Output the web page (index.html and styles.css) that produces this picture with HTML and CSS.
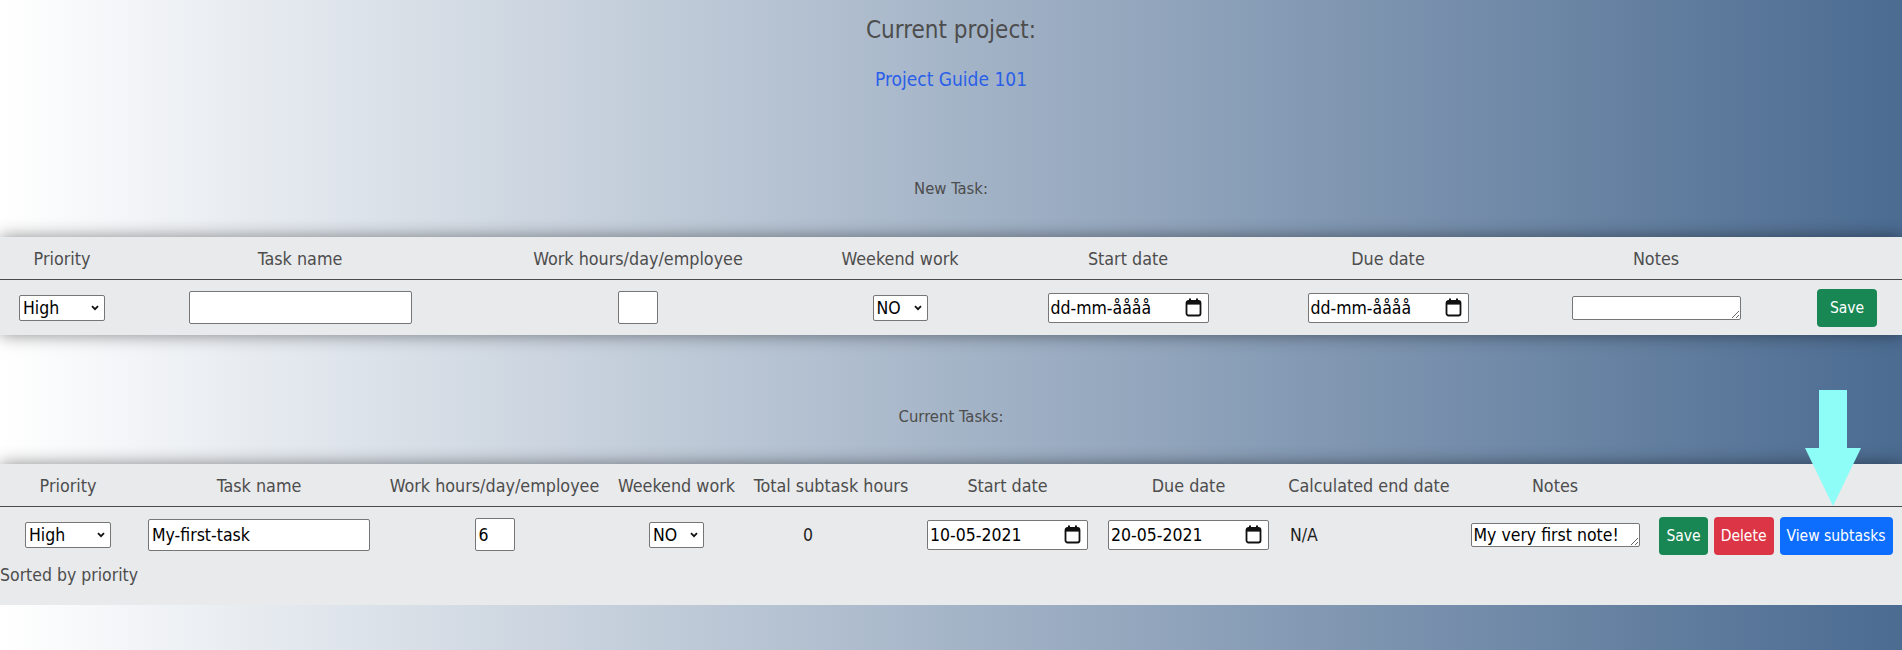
FILE: index.html
```html
<!DOCTYPE html>
<html lang="en">
<head>
<meta charset="utf-8">
<title>Current project</title>
<link rel="stylesheet" href="styles.css">
</head>
<body>
<header class="project-head">
  <h1 class="project-title">Current project:</h1>
  <a class="project-link" href="#">Project Guide 101</a>
</header>

<section class="section section-new">
  <p class="section-label">New Task:</p>
  <div class="panel">
    <table class="task-table">
      <colgroup>
        <col class="n1"><col class="n2"><col class="n3"><col class="n4"><col class="n5"><col class="n6"><col class="n7"><col class="n8">
      </colgroup>
      <thead>
        <tr>
          <th>Priority</th>
          <th>Task name</th>
          <th>Work hours/day/employee</th>
          <th>Weekend work</th>
          <th>Start date</th>
          <th>Due date</th>
          <th>Notes</th>
          <th></th>
        </tr>
      </thead>
      <tbody>
        <tr>
          <td><div class="cell">
            <span class="select-wrap sel-priority"><select class="select"><option>High</option><option>Medium</option><option>Low</option></select><svg class="chev" width="8" height="6" viewBox="0 0 8 6"><polyline points="1,1.2 4,4.2 7,1.2" fill="none" stroke="#111" stroke-width="1.8"/></svg></span>
          </div></td>
          <td><div class="cell"><input class="text-input task-input" type="text"></div></td>
          <td><div class="cell"><input class="text-input hours-input" type="text"></div></td>
          <td><div class="cell">
            <span class="select-wrap sel-weekend"><select class="select"><option>NO</option><option>YES</option></select><svg class="chev" width="8" height="6" viewBox="0 0 8 6"><polyline points="1,1.2 4,4.2 7,1.2" fill="none" stroke="#111" stroke-width="1.8"/></svg></span>
          </div></td>
          <td><div class="cell"><span class="date-field"><span class="date-text">dd-mm-åååå</span><svg class="cal" width="17" height="19" viewBox="0 0 17 19"><rect x="1.5" y="3" width="14" height="14.5" rx="2" fill="none" stroke="#111" stroke-width="1.8"/><rect x="1.5" y="3" width="14" height="3.6" fill="#111"/><rect x="4" y="0.5" width="2" height="3" fill="#111"/><rect x="11" y="0.5" width="2" height="3" fill="#111"/></svg></span></div></td>
          <td><div class="cell"><span class="date-field"><span class="date-text">dd-mm-åååå</span><svg class="cal" width="17" height="19" viewBox="0 0 17 19"><rect x="1.5" y="3" width="14" height="14.5" rx="2" fill="none" stroke="#111" stroke-width="1.8"/><rect x="1.5" y="3" width="14" height="3.6" fill="#111"/><rect x="4" y="0.5" width="2" height="3" fill="#111"/><rect x="11" y="0.5" width="2" height="3" fill="#111"/></svg></span></div></td>
          <td><div class="cell"><textarea class="notes"></textarea></div></td>
          <td><div class="cell"><button class="btn btn-success btn-wide" type="button">Save</button></div></td>
        </tr>
      </tbody>
    </table>
  </div>
</section>

<section class="section section-current">
  <p class="section-label">Current Tasks:</p>
  <div class="panel panel-current">
    <table class="task-table">
      <colgroup>
        <col class="c1"><col class="c2"><col class="c3"><col class="c4"><col class="c5"><col class="c6"><col class="c7"><col class="c8"><col class="c9"><col class="c10">
      </colgroup>
      <thead>
        <tr>
          <th>Priority</th>
          <th>Task name</th>
          <th>Work hours/day/employee</th>
          <th>Weekend work</th>
          <th>Total subtask hours</th>
          <th>Start date</th>
          <th>Due date</th>
          <th>Calculated end date</th>
          <th>Notes</th>
          <th></th>
        </tr>
      </thead>
      <tbody>
        <tr>
          <td><div class="cell">
            <span class="select-wrap sel-priority"><select class="select"><option>High</option><option>Medium</option><option>Low</option></select><svg class="chev" width="8" height="6" viewBox="0 0 8 6"><polyline points="1,1.2 4,4.2 7,1.2" fill="none" stroke="#111" stroke-width="1.8"/></svg></span>
          </div></td>
          <td><div class="cell"><input class="text-input task-input task-input-sm" type="text" value="My-first-task"></div></td>
          <td><div class="cell"><input class="text-input hours-input" type="text" value="6"></div></td>
          <td><div class="cell">
            <span class="select-wrap sel-weekend"><select class="select"><option>NO</option><option>YES</option></select><svg class="chev" width="8" height="6" viewBox="0 0 8 6"><polyline points="1,1.2 4,4.2 7,1.2" fill="none" stroke="#111" stroke-width="1.8"/></svg></span>
          </div></td>
          <td><div class="cell cell-total">0</div></td>
          <td><div class="cell"><span class="date-field"><span class="date-text">10-05-2021</span><svg class="cal" width="17" height="19" viewBox="0 0 17 19"><rect x="1.5" y="3" width="14" height="14.5" rx="2" fill="none" stroke="#111" stroke-width="1.8"/><rect x="1.5" y="3" width="14" height="3.6" fill="#111"/><rect x="4" y="0.5" width="2" height="3" fill="#111"/><rect x="11" y="0.5" width="2" height="3" fill="#111"/></svg></span></div></td>
          <td><div class="cell"><span class="date-field"><span class="date-text">20-05-2021</span><svg class="cal" width="17" height="19" viewBox="0 0 17 19"><rect x="1.5" y="3" width="14" height="14.5" rx="2" fill="none" stroke="#111" stroke-width="1.8"/><rect x="1.5" y="3" width="14" height="3.6" fill="#111"/><rect x="4" y="0.5" width="2" height="3" fill="#111"/><rect x="11" y="0.5" width="2" height="3" fill="#111"/></svg></span></div></td>
          <td><div class="cell cell-end">N/A</div></td>
          <td><div class="cell"><textarea class="notes">My very first note!</textarea></div></td>
          <td><div class="cell cell-actions">
            <button class="btn btn-success" type="button">Save</button>
            <button class="btn btn-danger" type="button">Delete</button>
            <button class="btn btn-primary" type="button">View subtasks</button>
          </div></td>
        </tr>
      </tbody>
    </table>
    <p class="sort-note">Sorted by priority</p>
  </div>
</section>

<svg class="arrow" width="56" height="116" viewBox="0 0 56 116"><polygon points="14,0 42,0 42,58 56,58 28,116 0,58 14,58" fill="#8efdf8"/></svg>
</body>
</html>
```

FILE: styles.css
```css
html, body {
  margin: 0;
  padding: 0;
}

body {
  position: relative;
  font-family: "DejaVu Sans Condensed", "DejaVu Sans", sans-serif;
  font-stretch: condensed;
  color: #4d4d4d;
  background: linear-gradient(to right, #ffffff 0%, #4b6b91 100%);
}

.project-head {
  text-align: center;
}

.project-title {
  margin: 0;
  padding-top: 15px;
  font-size: 24px;
  line-height: 30px;
  font-weight: normal;
  color: #4d4d4d;
}

.project-link {
  display: block;
  margin-top: 22px;
  font-size: 19px;
  line-height: 24px;
  color: #2a5fe9;
  text-decoration: none;
}

.section-label {
  margin: 0;
  text-align: center;
  font-size: 16.5px;
  line-height: 20px;
  color: #4d4d4d;
}

.section-new .section-label {
  margin-top: 88px;
}

.section-current .section-label {
  margin-top: 72px;
}

.panel {
  margin-top: 38px;
  background: #e9eaec;
  box-shadow: 0 0 16px rgba(0, 0, 0, 0.45);
}

.panel-current {
  margin-top: 37px;
  padding-bottom: 17px;
}

.task-table {
  width: 100%;
  table-layout: fixed;
  border-collapse: separate;
  border-spacing: 0;
}

.n1 { width: 124px; }
.n2 { width: 352px; }
.n3 { width: 324px; }
.n4 { width: 200px; }
.n5 { width: 256px; }
.n6 { width: 264px; }
.n7 { width: 272px; }
.n8 { width: 110px; }

.c1 { width: 136px; }
.c2 { width: 246px; }
.c3 { width: 225px; }
.c4 { width: 139px; }
.c5 { width: 170px; }
.c6 { width: 183px; }
.c7 { width: 179px; }
.c8 { width: 182px; }
.c9 { width: 190px; }
.c10 { width: 252px; }

.task-table th {
  box-sizing: border-box;
  height: 43px;
  padding: 0;
  font-size: 17.8px;
  font-weight: normal;
  color: #4d4d4d;
  text-align: center;
  vertical-align: middle;
  white-space: nowrap;
  border-bottom: 1px solid #4a4a4a;
}

.task-table td {
  box-sizing: border-box;
  height: 55px;
  padding: 0;
  vertical-align: middle;
}

.cell {
  display: flex;
  align-items: center;
  justify-content: center;
  font-size: 17.5px;
  color: #1e1e1e;
}

.cell-total {
  justify-content: flex-start;
  padding-left: 57px;
}

.cell-end {
  justify-content: flex-start;
  padding-left: 12px;
}

.cell-actions {
  gap: 6px;
  padding-top: 2px;
}

.select-wrap {
  position: relative;
  display: inline-block;
  height: 26px;
}

.sel-priority { width: 86px; }
.sel-weekend { width: 55px; }

.select {
  appearance: none;
  -webkit-appearance: none;
  box-sizing: border-box;
  width: 100%;
  height: 26px;
  margin: 0;
  padding: 0 16px 0 3px;
  font-family: inherit;
  font-stretch: condensed;
  font-size: 17.5px;
  line-height: 24px;
  color: #000;
  background: #fff;
  border: 1px solid #767676;
  border-radius: 2px;
}

.chev {
  position: absolute;
  right: 6px;
  top: 10px;
  pointer-events: none;
}

.text-input {
  box-sizing: border-box;
  height: 33px;
  margin: 0;
  padding: 0 3px;
  font-family: inherit;
  font-stretch: condensed;
  font-size: 17.5px;
  color: #000;
  background: #fff;
  border: 1px solid #767676;
  border-radius: 2px;
}

.task-input { width: 223px; }
.task-input-sm { width: 222px; height: 32px; }
.hours-input { width: 40px; }

.date-field {
  box-sizing: border-box;
  display: inline-flex;
  align-items: center;
  justify-content: space-between;
  width: 161px;
  height: 30px;
  padding: 0 6px 0 2px;
  background: #fff;
  border: 1px solid #767676;
  border-radius: 2px;
  font-size: 17.5px;
  color: #000;
}

.date-text {
  line-height: 28px;
}

.cal {
  display: block;
}

.notes {
  box-sizing: border-box;
  width: 169px;
  height: 24px;
  margin: 0;
  padding: 1px 2px;
  font-family: inherit;
  font-stretch: condensed;
  font-size: 17.5px;
  line-height: 20px;
  color: #000;
  background: #fff;
  border: 1px solid #767676;
  border-radius: 2px;
  overflow: hidden;
  white-space: nowrap;
}

.btn {
  display: inline-flex;
  align-items: center;
  justify-content: center;
  height: 38px;
  margin: 0;
  padding: 0 7px;
  font-family: inherit;
  font-stretch: condensed;
  font-size: 15.5px;
  color: #fff;
  border: none;
  border-radius: 4px;
  cursor: pointer;
}

.btn-wide {
  padding: 0 13px;
}

.btn-success { background: #198754; }
.btn-danger { background: #dc3545; }
.btn-primary { background: #0d6efd; }

.sort-note {
  margin: 0;
  font-size: 17.5px;
  line-height: 26px;
  color: #4d4d4d;
}

.arrow {
  position: absolute;
  top: 390px;
  right: 41px;
  z-index: 2;
}
```
